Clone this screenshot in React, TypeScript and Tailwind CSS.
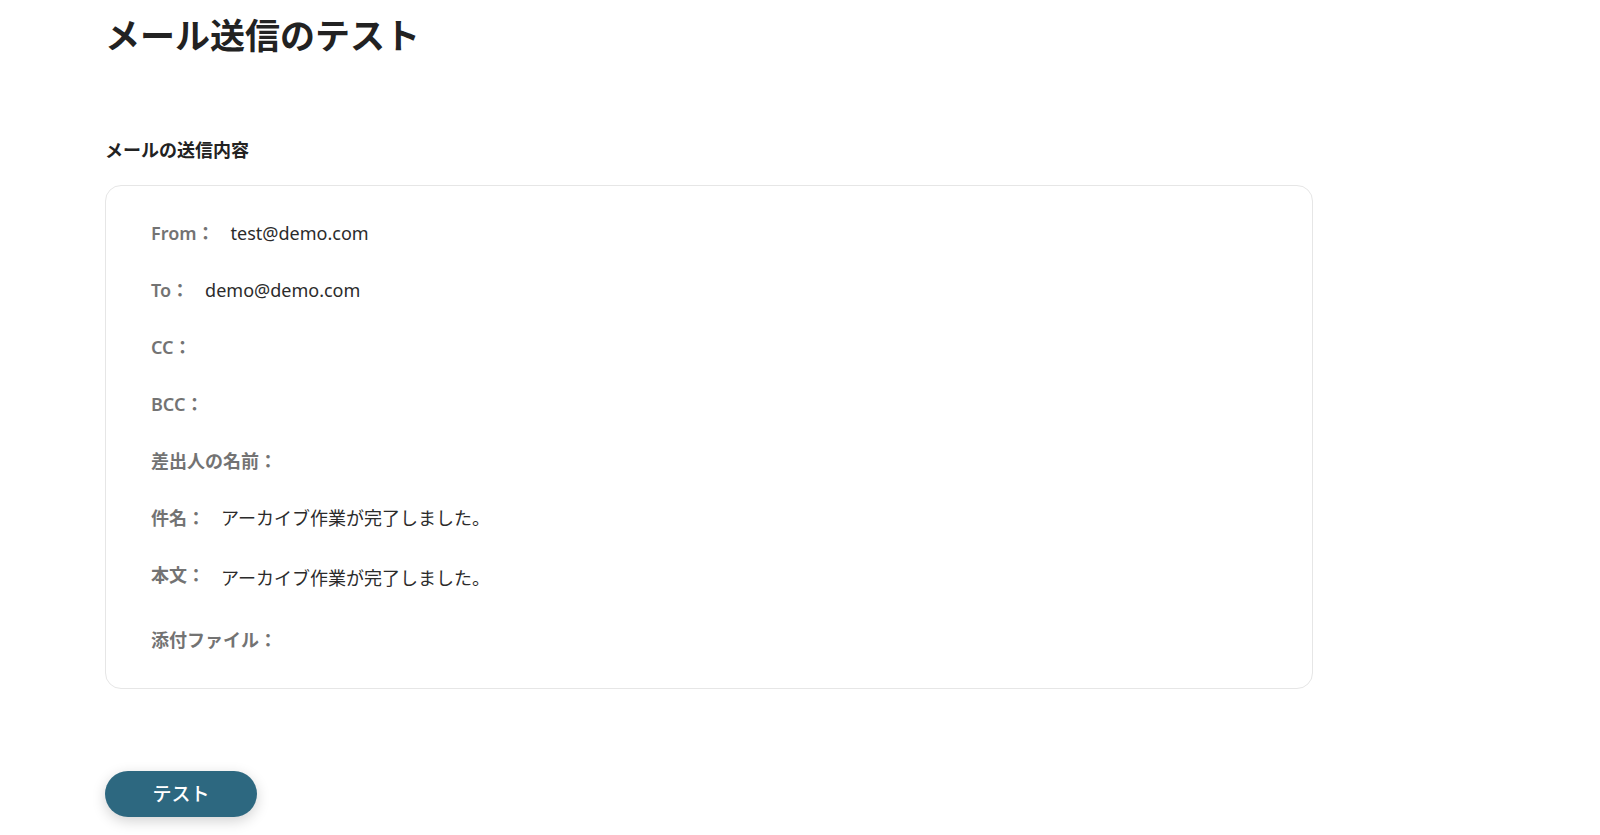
const font = "font-['Noto_Sans','Noto_Sans_CJK_JP',sans-serif]";

type Row = { label: string; value?: string; body?: boolean };

const rows: Row[] = [
  { label: 'From：', value: 'test@demo.com' },
  { label: 'To：', value: 'demo@demo.com' },
  { label: 'CC：' },
  { label: 'BCC：' },
  { label: '差出人の名前：' },
  { label: '件名：', value: 'アーカイブ作業が完了しました。' },
  { label: '本文：', value: 'アーカイブ作業が完了しました。', body: true },
  { label: '添付ファイル：' },
];

function MailRow({ row }: { row: Row }) {
  return (
    <div className="flex items-start gap-4 text-[18px] leading-[26px]">
      <span className="shrink-0 font-semibold text-[#737373]">{row.label}</span>
      {row.value && (
        <span className={row.body ? 'whitespace-pre-wrap pb-[5px] pt-[3px] text-[#2b2b2b]' : 'text-[#2b2b2b]'}>
          {row.value}
        </span>
      )}
    </div>
  );
}

export default function App() {
  return (
    <div className={`min-h-screen bg-white pl-[105px] pt-[10px] ${font}`}>
      <h1 className="text-[35px] font-bold leading-[51px] text-[#222]">メール送信のテスト</h1>

      <h2 className="mt-[76px] text-[18px] font-bold leading-[27px] text-[#222]">メールの送信内容</h2>

      <div className="mt-[21px] flex w-[1208px] flex-col gap-[31px] rounded-2xl border border-[#e6e6e6] pb-[35px] pl-[45px] pt-[34px]">
        {rows.map((r) => (
          <MailRow key={r.label} row={r} />
        ))}
      </div>

      <button className="mt-[82px] h-[46px] w-[152px] rounded-full bg-[#2d6880] text-[19px] font-medium text-white shadow-[0_4px_14px_rgba(0,0,0,0.18)]">
        テスト
      </button>
    </div>
  );
}
